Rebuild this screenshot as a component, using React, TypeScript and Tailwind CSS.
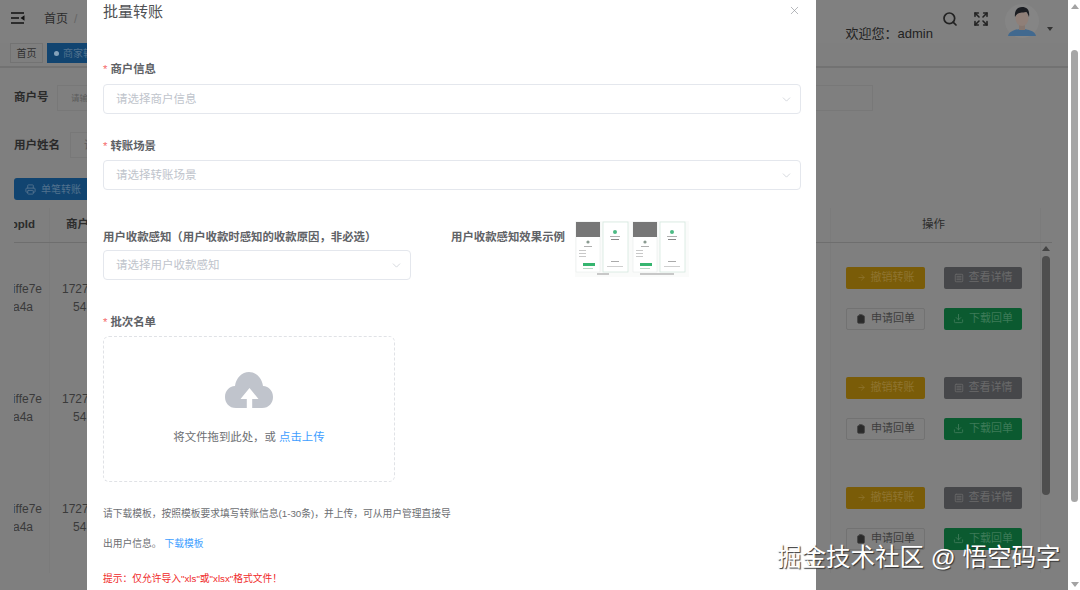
import { ArrowRight, ChevronDown, Clipboard, Download, Expand, Printer, Search, SquareMenu, X } from "lucide-react";

const font = "font-['Liberation_Sans','Noto_Sans_CJK_SC',sans-serif]";

const rows = [0, 1, 2];

function MenuIcon() {
  return (
    <svg width="14" height="12" viewBox="0 0 14 12" className="ml-[11px]">
      <path d="M0 1h13M0 6h8M0 11h13" stroke="#111" strokeWidth="1.6" />
      <path d="M13.5 3.2v5.6L9.5 6z" fill="#111" />
    </svg>
  );
}

function Avatar() {
  return (
    <svg width="34" height="34" viewBox="0 0 34 34">
      <circle cx="17" cy="17" r="17" fill="#858585" />
      <path d="M3 32c1-5 8-7 14-7s13 2 14 7z" fill="#41698f" />
      <rect x="14" y="19" width="6" height="7" fill="#85766f" />
      <ellipse cx="17" cy="14" rx="6.5" ry="8" fill="#8f7f78" />
      <path d="M10 13c-1-7 3-10 7-10 5 0 8 3 7 10-1-3-2-5-3-5-4 1-9 0-11 5z" fill="#1b1d22" />
    </svg>
  );
}

function ExamplePicture() {
  // the small example picture next to the label
  return (
    <svg width="114" height="56" viewBox="0 0 114 56" className="shrink-0">
      <rect width="114" height="56" fill="#fafbfa" />
      {[1, 58].map(x => (
        <g key={x}>
          <rect x={x} y="1" width="24" height="50" fill="#fff" stroke="#e3e8e5" strokeWidth="0.5" />
          <rect x={x} y="1" width="24" height="15" fill="#777" />
          <circle cx={x + 12} cy="21" r="1.6" fill="#8a9a90" />
          <rect x={x + 8} y="25" width="8" height="1" fill="#b0b0b0" />
          <rect x={x + 3} y="29" width="7" height="1" fill="#c8c8c8" />
          <rect x={x + 3} y="32" width="7" height="1" fill="#c8c8c8" />
          <rect x={x + 3} y="35" width="7" height="1" fill="#c8c8c8" />
          <rect x={x + 7} y="42" width="12" height="3" fill="#35b56f" />
          <rect x={x + 7} y="47" width="10" height="1" fill="#b7d8c5" />
          <rect x={x + 27} y="1" width="25" height="50" fill="#fff" stroke="#cfe6da" strokeWidth="0.7" />
          <circle cx={x + 39} cy="11" r="2" fill="#4dbb85" />
          <rect x={x + 34} y="15" width="10" height="1" fill="#b0b0b0" />
          <rect x={x + 35} y="18" width="8" height="1" fill="#888" />
          <rect x={x + 35} y="40" width="8" height="1" fill="#aaa" />
          <rect x={x + 31} y="45" width="16" height="1" fill="#cfcfcf" />
        </g>
      ))}
      <rect x="22" y="52" width="12" height="2" fill="#c8c8c8" />
      <rect x="65" y="52" width="34" height="2" fill="#c8c8c8" />
    </svg>
  );
}

function ActionButton({ color, icon, label }: { color: string; icon: React.ReactNode; label: string }) {
  return (
    <span className={`flex h-[22px] items-center justify-center gap-[5px] rounded-[2px] text-[11px] ${color}`}>
      {icon}
      {label}
    </span>
  );
}

function TableRow() {
  return (
    <div className="grid h-[110px] grid-cols-[36px_780px_210px_12px] border-[#757575] last:border-b">
      <div className="flex flex-col items-end justify-end overflow-hidden border-r border-[#7b7b7b] pb-[37px] pr-[7px] text-[12px] leading-[18px] text-[#3a3a3a]">
        <span>iffe7e</span>
        <span className="w-[29px]">a4a</span>
      </div>
      <div className="flex flex-col justify-end pb-[37px] pl-[12px] text-[12px] leading-[18px] text-[#3a3a3a]">
        <span>1727</span>
        <span className="pl-[11px]">54</span>
      </div>
      <div className="grid grid-cols-[79px_78px] content-center gap-x-[19px] gap-y-[19px] border-l border-[#7b7b7b] pl-[15px]">
        <ActionButton color="bg-[#7a5c08] text-[#8f7430]" icon={<ArrowRight size={9} />} label="撤销转账" />
        <ActionButton color="bg-[#46474a] text-[#6a6a6a]" icon={<SquareMenu size={10} />} label="查看详情" />
        <ActionButton color="border border-[#727272] text-[#3d3d3d]" icon={<Clipboard size={10} fill="#2a2a2a" />} label="申请回单" />
        <ActionButton color="bg-[#0b5a30] text-[#3d7a58]" icon={<Download size={11} />} label="下载回单" />
      </div>
      <div className="border-l border-[#7b7b7b]" />
    </div>
  );
}

function FormLabel({ text, required }: { text: string; required?: boolean }) {
  return (
    <div className="flex h-4 items-center pt-px text-[11.4px] font-bold leading-4 text-[#606266]">
      {required && <span className="mr-[3px] font-normal text-[#f56c6c]">*</span>}
      {text}
    </div>
  );
}

function SelectBox({ placeholder, className }: { placeholder: string; className?: string }) {
  return (
    <div className={`flex h-[30px] items-center justify-between rounded-[4px] border border-[#e4e7ed] pl-[12px] pr-[7px] pt-px text-[11.5px] text-[#c0c4cc] ${className ?? ""}`}>
      {placeholder}
      <ChevronDown size={13} strokeWidth={1.2} />
    </div>
  );
}

export default function App() {
  return (
    <div className={`flex h-[590px] w-[1080px] overflow-hidden bg-white ${font}`}>
      <div className="relative h-full w-[1068px] overflow-hidden bg-[#7f7f7f]">
        <header className="relative flex h-[43px] items-start bg-[#808080]">
          <div className="mt-[12px]">
            <MenuIcon />
          </div>
          <span className="ml-[19px] mt-[11px] text-[12px] leading-4 text-[#2c2c2c]">首页</span>
          <span className="ml-[6px] mt-[11px] text-[12px] leading-4 text-[#666]">/</span>
          <div className="ml-auto mt-[11px] flex items-start">
            <span className="mr-[9px] mt-[15px] text-[13px] leading-4 text-[#222]">欢迎您：admin</span>
            <Search size={16} strokeWidth={2.6} className="text-[#222]" />
            <Expand size={16} strokeWidth={2.4} className="ml-[15px] text-[#222]" />
            <div className="ml-[16px] mt-[-7px]">
              <Avatar />
            </div>
            <span className="ml-[8px] mt-[16px] h-0 w-0 border-x-[3px] border-t-[4px] border-x-transparent border-t-[#333]" />
            <span className="w-[15px]" />
          </div>
        </header>

        <div className="flex h-[25px] items-start gap-[4px] border-b-2 border-[#727272] pl-[10px]">
          <span className="flex h-[20px] w-[33px] items-center justify-center border border-[#737373] text-[10px] text-[#2f2f2f]">首页</span>
          <span className="flex h-[20px] w-[120px] items-center gap-[4px] bg-[#114470] pl-[7px] text-[10px] text-[#52728e]">
            <span className="h-[5px] w-[5px] rounded-full bg-[#85a2ba]" />
            商家转账
          </span>
        </div>

        <div className="mt-[17px] flex h-[26px] items-center pl-[14px]">
          <span className="w-[43px] text-[11.5px] font-bold text-[#2a2a2a]">商户号</span>
          <div className="flex h-[26px] w-[816px] items-center border border-[#787878] pl-[13px] text-[8.5px] text-[#5c5c5c]">请输</div>
        </div>
        <div className="mt-[21px] flex h-[26px] items-center pl-[14px]">
          <span className="w-[56px] pt-px text-[11.5px] font-bold text-[#2a2a2a]">用户姓名</span>
          <div className="flex h-[26px] w-[200px] items-center border border-[#787878] pl-[13px] text-[11px] text-[#5c5c5c]">请</div>
        </div>

        <div className="mt-[20px] pl-[14px]">
          <span className="flex h-[22px] w-[100px] items-center gap-[5px] rounded-[3px] bg-[#114470] pl-[11px] text-[10px] text-[#52728e]">
            <Printer size={11} />
            单笔转账
          </span>
        </div>

        <div className="ml-[14px] mt-[7px] w-[1038px]">
          <div className="grid h-[36px] grid-cols-[36px_780px_210px_12px] border-b border-[#6e6e6e] pt-px text-[11.5px] font-bold text-[#2c2c2c]">
            <span className="flex items-center justify-end overflow-hidden border-r border-[#7b7b7b] pr-[14px]">ppId</span>
            <span className="flex items-center pl-[16px]">商户号</span>
            <span className="flex items-center justify-center border-l border-[#7b7b7b] pr-[4px] font-normal">操作</span>
            <span className="border-l border-[#7b7b7b]" />
          </div>
          <div className="relative">
            {rows.map(r => (
              <TableRow key={r} />
            ))}
            {/* table scrollbar */}
            <div className="absolute right-[2px] top-[3px] flex w-[8px] flex-col items-center">
              <span className="h-0 w-0 border-x-[4px] border-b-[5px] border-x-transparent border-b-[#444]" />
              <span className="mt-[5px] h-[239px] w-[8px] rounded-full bg-[#4e4e4e]" />
            </div>
          </div>
        </div>

        {/* dialog */}
        <div className="absolute left-[87px] top-0 h-[590px] w-[729px] overflow-hidden bg-white pl-[16px] pr-[15px]">
          <X size={13} strokeWidth={1.2} className="absolute right-[15px] top-[4px] text-[#909399]" />
          <h2 className="text-[15px] leading-6 text-[#4f5154]">批量转账</h2>

          <div className="mt-[36px]">
            <FormLabel text="商户信息" required />
          </div>
          <SelectBox placeholder="请选择商户信息" className="mt-[8px]" />

          <div className="mt-[23px]">
            <FormLabel text="转账场景" required />
          </div>
          <SelectBox placeholder="请选择转账场景" className="mt-[7px]" />

          <div className="mt-[31px] flex h-[59px] items-start">
            <div className="w-[308px] pt-[7px]">
              <FormLabel text="用户收款感知（用户收款时感知的收款原因，非必选）" />
              <SelectBox placeholder="请选择用户收款感知" className="mt-[6px]" />
            </div>
            <div className="ml-[40px] pt-[7px]">
              <FormLabel text="用户收款感知效果示例" />
            </div>
            <div className="ml-[10px]">
              <ExamplePicture />
            </div>
          </div>

          <div className="mt-[33px]">
            <FormLabel text="批次名单" required />
          </div>
          <div className="mt-[7px] flex h-[146px] w-[292px] flex-col items-center rounded-[6px] border border-dashed border-[#e0e2e6]">
            <svg width="48" height="36" viewBox="0 0 48 36" className="mt-[35px]">
              <path d="M11 36C4 36 0 31 0 25C0 19 4 14.5 10 14C11 6 17 0 24 0C31 0 37 6 38 14C44 14.5 48 19 48 25C48 31 44 36 37 36Z" fill="#c0c4cc" />
              <path d="M24.5 16L33.5 27H27.2V36H21.8V27H15.5Z" fill="#fff" />
            </svg>
            <div className="mt-[21px] text-[11.4px] leading-4 text-[#6c6e72]">
              将文件拖到此处，或 <span className="text-[#409eff]">点击上传</span>
            </div>
          </div>

          <div className="mt-[17px] whitespace-nowrap text-[9.75px] leading-[30px] text-[#6c6e72]">请下载模板，按照模板要求填写转账信息(1-30条)，并上传，可从用户管理直接导</div>
          <div className="flex gap-[3px] text-[9.75px] leading-[30px]">
            <span className="text-[#6c6e72]">出用户信息。</span>
            <span className="text-[#409eff]">下载模板</span>
          </div>
          <p className="mt-[5px] text-[9.75px] leading-[30px] text-[#f02a2a]">提示：仅允许导入"xls"或"xlsx"格式文件！</p>
        </div>
      </div>

      {/* page scrollbar */}
      <div className="relative flex w-[12px] flex-col items-center bg-white pl-[1px]">
        <span className="mt-[4px] h-0 w-0 border-x-[4px] border-b-[5px] border-x-transparent border-b-[#a3a3a3]" />
        <span className="mt-[41px] h-[452px] w-[7px] rounded-full bg-[#a6a6a6]" />
        <span className="mt-auto mb-[3px] h-0 w-0 border-x-[4px] border-t-[5px] border-x-transparent border-t-[#a3a3a3]" />
      </div>

      <div className="absolute left-[777px] top-[543px] whitespace-nowrap text-[24.5px] leading-[30px] text-white [text-shadow:1px_1px_1px_#333]">
        掘金技术社区 @ 悟空码字
      </div>
    </div>
  );
}
